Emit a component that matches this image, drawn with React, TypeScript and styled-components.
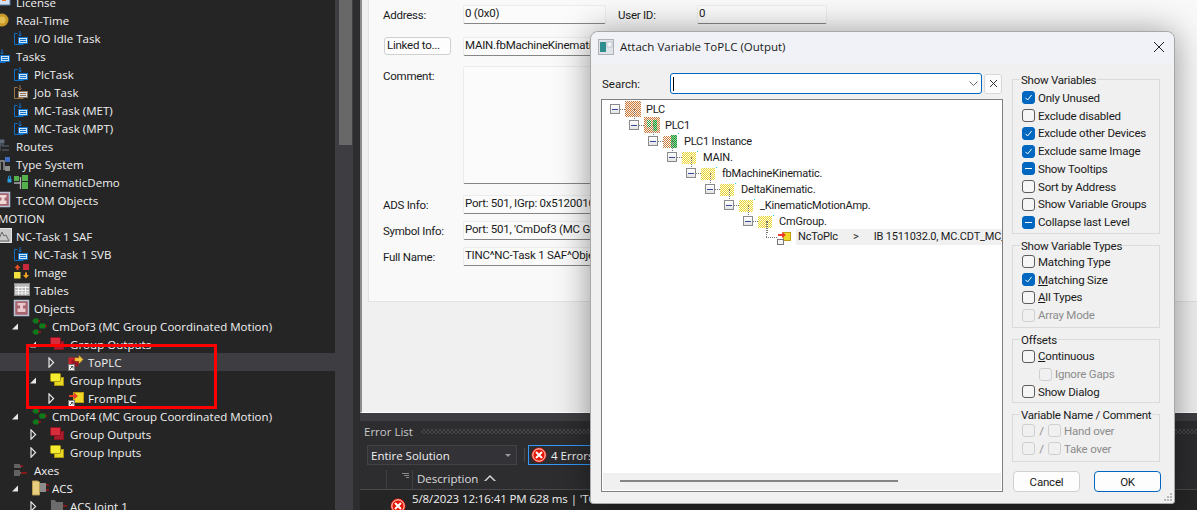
import React from 'react';
import styled, { createGlobalStyle } from 'styled-components';

const uiFont = `"Open Sans", "Noto Sans", "Liberation Sans", sans-serif`;
const bodyFont = `Roboto, "Liberation Sans", sans-serif`;

const Global = createGlobalStyle`
  html, body { margin: 0; padding: 0; background: #2d2d30; }
  * { box-sizing: border-box; }
`;

const Page = styled.div`
  width: 1197px;
  height: 510px;
  display: flex;
  position: relative;
  overflow: hidden;
  background: #2d2d30;
  font-family: ${uiFont};
  font-size: 11.5px;
`;

/* ---- Solution tree ---- */
const TreePanel = styled.div`
  width: 335px;
  flex: none;
  height: 510px;
  background: #252526;
  overflow: hidden;
`;
const TreeList = styled.div`
  margin: -7px 0 0 -42px;
  width: 377px;
`;
const TreeRow = styled.div<{ $level: number; $selected?: boolean }>`
  height: 18px;
  display: flex;
  align-items: center;
  padding-left: ${(p) => (p.$level + 1) * 18}px;
  background: ${(p) => (p.$selected ? '#3e3e42' : 'transparent')};
  color: #f1f1f1;
  white-space: nowrap;
  letter-spacing: 0.03px;
`;
const ArrowSlot = styled.span`
  width: 20px;
  height: 18px;
  flex: none;
  display: flex;
  align-items: center;
`;
const IconSlot = styled.span`
  width: 18px;
  height: 18px;
  flex: none;
  margin-right: 2px;
  display: block;
  svg { display: block; overflow: visible; }
`;
const Scrollbar = styled.div`
  width: 18px;
  flex: none;
  background: #3e3e42;
  padding: 0 1px 0 4px;
`;
const ScrollThumb = styled.div`
  height: 145px;
  background: #686868;
`;
const Gutter = styled.div`
  width: 7px;
  flex: none;
  background: #2d2d30;
`;

/* ---- Right column ---- */
const RightColumn = styled.div`
  flex: 1;
  min-width: 0;
  display: flex;
  flex-direction: column;
`;
const PropertyPane = styled.div`
  height: 413px;
  flex: none;
  background: #f0f0f0;
  border-left: 2px solid #8c8c8c;
  border-bottom: 1px solid #ffffff;
  padding-left: 6px;
  overflow: hidden;
`;
const FormPanel = styled.div`
  height: 302px;
  width: 900px;
  background: #f9f9f9;
  border-left: 1px solid #e2e2e2;
  border-bottom: 1px solid #e2e2e2;
  padding: 5px 0 0 14px;
  display: flex;
  flex-direction: column;
  color: #1a1a1a;
  font-family: ${bodyFont};
  font-size: 11.5px;
  letter-spacing: -0.25px;
`;
const FormRow = styled.div<{ $gap?: number }>`
  display: flex;
  align-items: flex-start;
  margin-top: ${(p) => p.$gap ?? 0}px;
`;
const FormLabel = styled.div<{ $w?: number; $ml?: number }>`
  width: ${(p) => p.$w ?? 80}px;
  height: 18px;
  flex: none;
  margin-left: ${(p) => p.$ml ?? 0}px;
  line-height: 21px;
`;
const ValueBox = styled.div<{ $w?: number; $h?: number }>`
  width: ${(p) => p.$w ?? 500}px;
  height: ${(p) => p.$h ?? 19}px;
  flex: none;
  background: #fbfbfb;
  border: 1px solid #ececec;
  border-bottom-color: #868686;
  border-radius: 2px;
  padding-left: 1px;
  line-height: 15px;
  white-space: nowrap;
  overflow: hidden;
`;
const LinkButton = styled.div`
  width: 67px;
  height: 18px;
  flex: none;
  margin: 0 12px 0 1px;
  background: #fdfdfd;
  border: 1px solid #d0d0d0;
  border-radius: 3px;
  padding-left: 2px;
  line-height: 15px;
`;

/* ---- Error list ---- */
const TabStrip = styled.div`
  height: 8px;
  flex: none;
  background: #3e3e42;
`;
const ErrorPanel = styled.div`
  flex: 1;
  background: #2d2d30;
  color: #f1f1f1;
  overflow: hidden;
`;
const ErrorTitleBar = styled.div`
  height: 20px;
  display: flex;
  align-items: center;
  gap: 8px;
  padding-left: 4px;
  color: #c8c8c8;
`;
const TitleDots = styled.div`
  flex: 1;
  height: 5px;
  background: repeating-conic-gradient(#46464a 0 25%, transparent 0 50%) 0 0 / 4px 4px;
`;
const ErrorToolbar = styled.div`
  height: 20px;
  margin-top: 4px;
  padding-left: 7px;
  display: flex;
  align-items: center;
`;
const ScopeCombo = styled.div`
  width: 150px;
  height: 20px;
  background: #333337;
  border: 1px solid #434346;
  padding: 0 3px;
  display: flex;
  align-items: center;
  justify-content: space-between;
`;
const ComboCaret = styled.span`
  width: 0;
  height: 0;
  margin-right: 2px;
  border: 3.5px solid transparent;
  border-top: 3.5px solid #999999;
  border-bottom: 0;
`;
const ToolbarSep = styled.div`
  width: 1px;
  height: 14px;
  background: #4a4a4e;
  margin: 0 3px 0 7px;
`;
const ErrorFilter = styled.div`
  height: 20px;
  width: 120px;
  border: 1px solid #3399ff;
  display: flex;
  align-items: center;
  gap: 4px;
  padding-left: 2px;
`;
const ListHeader = styled.div`
  height: 20px;
  margin-top: 5px;
  display: flex;
  border-bottom: 1px solid #4a4a4e;
  color: #dcdcdc;
`;
const HeaderCell = styled.div<{ $w: number }>`
  width: ${(p) => p.$w}px;
  flex: none;
  border-right: 1px solid #3f3f46;
  display: flex;
  align-items: center;
  justify-content: flex-end;
  padding: 0 3px 8px 0;
`;
const DescriptionCell = styled.div`
  display: flex;
  align-items: center;
  gap: 6px;
  padding: 0 0 3px 4px;
`;
const SortUp = styled.span`
  width: 0;
  height: 0;
  border: 6px solid transparent;
  border-top: 0;
  border-bottom: 6px solid #d8d8d8;
  position: relative;
  &::after {
    content: '';
    position: absolute;
    left: -4px;
    top: 2px;
    border: 4px solid transparent;
    border-top: 0;
    border-bottom: 4px solid #2d2d30;
  }
`;
const ErrorRow = styled.div`
  display: flex;
  padding-left: 30px;
  background: #252526;
  height: 30px;
`;
const ErrorRowIcon = styled.div`
  width: 22px;
  flex: none;
  padding-top: 8px;
`;
const ErrorRowText = styled.div`
  line-height: 17px;
  white-space: nowrap;
  letter-spacing: -0.1px;
`;

/* ---- Dialog ---- */
const Dialog = styled.div`
  position: absolute;
  left: 590px;
  top: 31px;
  width: 585px;
  height: 473px;
  background: #f0f0f0;
  border: 1px solid #a8a8a8;
  border-radius: 8px 8px 3px 3px;
  box-shadow: 0 2px 34px rgba(0, 0, 0, 0.42);
  display: flex;
  flex-direction: column;
  color: #1a1a1a;
  font-family: ${bodyFont};
  font-size: 11.5px;
`;
const DialogTitle = styled.div`
  height: 31px;
  flex: none;
  background: #f0f2f7;
  border-radius: 8px 8px 0 0;
  display: flex;
  align-items: center;
  padding: 0 9px 2px 7px;
  gap: 6px;
  font-family: ${uiFont};
`;
const TitleText = styled.div`
  flex: 1;
`;
const DialogBody = styled.div`
  flex: 1;
  display: flex;
  gap: 9px;
  padding: 10px 13px 11px 10px;
  min-height: 0;
`;
const LeftColumn = styled.div`
  width: 402px;
  flex: none;
  display: flex;
  flex-direction: column;
`;
const SearchRow = styled.div`
  height: 21px;
  flex: none;
  display: flex;
  align-items: center;
`;
const SearchLabel = styled.div`
  width: 69px;
  padding-left: 1px;
`;
const SearchInput = styled.div`
  width: 312px;
  height: 21px;
  background: #ffffff;
  border: 1px solid #0067c0;
  border-radius: 3px;
  display: flex;
  align-items: center;
  justify-content: space-between;
  padding: 0 3px 0 2px;
`;
const Caret = styled.span`
  width: 1px;
  height: 14px;
  background: #000;
`;
const ClearButton = styled.div`
  width: 18px;
  height: 20px;
  margin-left: 2px;
  background: #fbfbfb;
  border: 1px solid #d8d8d8;
  border-radius: 3px;
  display: flex;
  align-items: center;
  justify-content: center;
`;
const VarTree = styled.div`
  flex: 1;
  margin-top: 5px;
  background: #ffffff;
  border: 1px solid #7f7f7f;
  display: flex;
  flex-direction: column;
  min-height: 0;
  overflow: hidden;
`;
const VarTreeRows = styled.div`
  flex: 1;
  padding-top: 1px;
  font-size: 11px;
  letter-spacing: -0.2px;
`;
const VarRow = styled.div<{ $level: number }>`
  height: 16px;
  display: flex;
  align-items: center;
  padding-left: ${(p) => 8 + p.$level * 19}px;
  position: relative;
  white-space: nowrap;
`;
const LeafRow = styled.div`
  height: 16px;
  display: flex;
  align-items: center;
  position: relative;
  white-space: nowrap;
`;
const ExpandBox = styled.span`
  width: 10px;
  height: 10px;
  flex: none;
  background: linear-gradient(#ffffff, #e4e4e4);
  border: 1px solid #8a8a8a;
  display: flex;
  align-items: center;
  justify-content: center;
  &::after {
    content: '';
    width: 6px;
    height: 1px;
    background: #3a4a9a;
  }
`;
const DotLine = styled.span<{ $w?: number }>`
  width: ${(p) => p.$w ?? 5}px;
  height: 1px;
  flex: none;
  border-top: 1px dotted #777777;
`;
const VDot = styled.span<{ $h: number; $top: number; $left: number }>`
  position: absolute;
  left: ${(p) => p.$left}px;
  top: ${(p) => p.$top}px;
  height: ${(p) => p.$h}px;
  border-left: 1px dotted #777777;
`;
const DitherSlot = styled.span`
  width: 16px;
  height: 16px;
  flex: none;
  margin-right: 5px;
  svg { display: block; overflow: visible; }
`;
const VarIcon = styled.span`
  width: 16px;
  height: 16px;
  flex: none;
  margin-right: 3px;
  svg { display: block; overflow: visible; }
`;
const LeafSpacer = styled.span`
  width: 164px;
  flex: none;
`;
const VarSelected = styled.div`
  flex: 1;
  height: 16px;
  line-height: 16px;
  background: #f0f0f0;
  padding-left: 2px;
  overflow: hidden;
  white-space: pre;
`;
const HScroll = styled.div`
  height: 17px;
  flex: none;
  margin: 0 1px 1px;
  background: #f0f0f0;
  padding: 7px 0 0 17px;
`;
const HThumb = styled.div`
  width: 278px;
  height: 2px;
  background: #858585;
`;
const RightPanel = styled.div`
  width: 149px;
  flex: none;
  display: flex;
  flex-direction: column;
  letter-spacing: -0.2px;
`;
const Group = styled.fieldset<{ $h: number; $mt: number; $pt: number }>`
  margin: ${(p) => p.$mt}px 0 0;
  padding: ${(p) => p.$pt}px 0 0 9px;
  height: ${(p) => p.$h}px;
  width: 148px;
  border: 1px solid #dadada;
  min-inline-size: 0;
`;
const GroupLegend = styled.legend`
  padding: 0 1px;
  margin-left: -2px;
  line-height: 13px;
  height: 11px;
  white-space: nowrap;
  letter-spacing: -0.25px;
`;
const CheckRow = styled.div<{ $indent?: number }>`
  height: 17.75px;
  display: flex;
  align-items: center;
  padding-left: ${(p) => p.$indent ?? 0}px;
`;
const Box = styled.span<{ $state: 'on' | 'off' | 'mixed'; $disabled?: boolean; $flush?: boolean }>`
  width: 13px;
  height: 13px;
  flex: none;
  margin-right: ${(p) => (p.$flush ? 0 : 3)}px;
  border-radius: 3px;
  display: flex;
  align-items: center;
  justify-content: center;
  background: ${(p) => (p.$state === 'off' ? (p.$disabled ? '#f0f0f0' : '#f6f6f6') : '#0067c0')};
  border: 1px solid ${(p) => (p.$state !== 'off' ? '#0067c0' : p.$disabled ? '#cfcfcf' : '#5c5c5c')};
`;
const Dash = styled.span`
  width: 7px;
  height: 1px;
  background: #ffffff;
`;
const CheckLabel = styled.span<{ $disabled?: boolean }>`
  color: ${(p) => (p.$disabled ? '#8c8c8c' : '#1a1a1a')};
  white-space: nowrap;
  u { text-decoration: underline; }
`;
const Slash = styled.span`
  color: #8c8c8c;
  width: 13px;
  text-align: center;
`;
const ButtonRow = styled.div`
  display: flex;
  justify-content: space-between;
  width: 148px;
  margin-top: 9px;
  margin-left: 1px;
`;
const DialogButton = styled.div<{ $primary?: boolean }>`
  width: 67px;
  height: 21px;
  background: #fdfdfd;
  border: 1px solid ${(p) => (p.$primary ? '#0067c0' : '#d0d0d0')};
  border-radius: 4px;
  display: flex;
  align-items: center;
  justify-content: center;
`;
const Grip = styled.svg`
  position: absolute;
  right: 2px;
  bottom: 2px;
`;
const Highlight = styled.div`
  position: absolute;
  left: 26px;
  top: 344px;
  width: 191px;
  height: 65px;
  border: 3px solid #ff0000;
  pointer-events: none;
`;

/* ---- Icons ---- */
const Expanded = () => (
  <svg width="7" height="7" viewBox="0 0 7 7"><path d="M6 0.5V6.5H0z" fill="#e8e8e8" /></svg>
);
const Collapsed = () => (
  <svg width="7" height="11" viewBox="0 0 7 11"><path d="M1 .8L5.6 5.5 1 10.2z" fill="none" stroke="#e8e8e8" strokeWidth="1.2" /></svg>
);

const Task = ({ c = '#0e70c9' }: { c?: string }) => (
  <>
    <path d="M3.5 4.5H.5v11h9" fill="none" stroke={c} />
    <path d="M6 2v5M4.5 5.5L6 7l1.5-1.5" fill="none" stroke={c} />
    <rect x="4.5" y="8.5" width="9" height="6" fill="#cfe4f7" stroke={c} />
    <path d="M6 10.5h6M6 12.5h6" stroke={c} />
  </>
);
const Stack = ({ a, b, e }: { a: string; b: string; e: string }) => (
  <>
    <rect x="4.5" y="6.5" width="9" height="8" fill={b} stroke={e} />
    <rect x=".5" y="2.5" width="10" height="8" rx="1" fill={a} stroke={e} />
  </>
);
const Badge = () => (
  <>
    <rect x=".5" y="11.5" width="6" height="6" fill="#f4f4f4" stroke="#777" />
    <path d="M2 16l2.5-2.5M3 13.5h2v2" stroke="#333" fill="none" strokeWidth=".8" />
  </>
);
const GreenAxes = () => (
  <>
    <path d="M0 4h2M2 2h4v4H2zM8 9h-1M8 7h5v4H8zM0 15h2M2 13h4v4H2z" stroke="#0f7a1a" fill="#0f7a1a" />
    <path d="M6 4h2M13 9h2M6 15h3" stroke="#e01010" />
  </>
);
const Level0 = ({ children }: { children: React.ReactNode }) => <g transform="translate(4 0)">{children}</g>;
const icons: Record<string, React.ReactNode> = {
  license: (
    <Level0>
      <rect x="-3" y="-2" width="13" height="14" fill="#cfe0f2" stroke="#5c7da6" />
      <rect x="2" y="-2" width="4" height="10" fill="#e8762c" />
    </Level0>
  ),
  realtime: (
    <Level0>
      <circle cx="2" cy="9" r="6.5" fill="#c79a2a" />
      <circle cx="2" cy="9" r="3.5" fill="#e4bd50" />
    </Level0>
  ),
  task: <Task />,
  job: <Task c="#9a7448" />,
  tasks: <Task />,
  routes: (
    <Level0>
      <path d="M-2 3h6v3h-6zM-4 8h8M0 6v8M2 13h7M2 9h7" fill="#5d6a78" stroke="#5d6a78" />
    </Level0>
  ),
  types: (
    <Level0>
      <rect x="5" y="2" width="5" height="5" fill="#3d6fc0" />
      <rect x="5" y="11" width="5" height="5" fill="#8f8f8f" />
      <path d="M0 6h4v9M-4 8h4v7" fill="none" stroke="#9a9a9a" strokeWidth="1.4" />
    </Level0>
  ),
  kinematic: (
    <>
      <rect x="8" y="2" width="6" height="6" fill="#53b04a" />
      <rect x="8" y="9" width="6" height="7" fill="#53b04a" />
      <rect x="0" y="3" width="5" height="5" fill="#53b04a" />
      <path d="M6.5 4v12M0 10h6.5v6" fill="none" stroke="#b0b0b0" strokeWidth="1.3" />
      <rect x="-6.5" y="5.5" width="4" height="4" fill="#2aa0e0" />
      <path d="M-5.5 5.5V4a1 1 0 012 0v1.5" fill="none" stroke="#2aa0e0" />
    </>
  ),
  tccom: (
    <Level0>
      <rect x="-3.5" y="1.5" width="13" height="14" fill="#a8646c" stroke="#b8c4d8" strokeWidth="1.5" />
      <path d="M-.5 4h7v2.5H4.5v3h2V13h-7V9.5h2v-3h-2z" fill="#f0d8d8" />
    </Level0>
  ),
  nc: (
    <Level0>
      <rect x="-3.5" y="1.5" width="15" height="14" fill="#c8c8c8" stroke="#e4e4e4" />
      <path d="M-2 14l4-9 2 4 2-1 3 6z" fill="none" stroke="#666" />
    </Level0>
  ),
  image: (
    <>
      <rect x="9" y="1" width="6" height="6" fill="#c8283c" />
      <rect x="0" y="9" width="6.5" height="6.5" fill="#f0e040" />
      <path d="M3.5 1.5L6.5 5H.5z" fill="#e85020" />
      <rect x="2.5" y="5" width="2" height="2" fill="#e85020" />
      <path d="M12 15.5L9 12h6z" fill="#f0a020" />
      <rect x="11" y="9.5" width="2" height="2.5" fill="#f0a020" />
    </>
  ),
  tables: (
    <>
      <rect x=".5" y="2.5" width="15" height="12" fill="#b8b8b8" stroke="#8c8c8c" />
      <path d="M1 6.5h14M1 9.5h14M1 12h14M4.5 5v9M8 5v9M11.5 5v9" stroke="#f4f4f4" />
    </>
  ),
  objects: (
    <>
      <rect x=".5" y="1.5" width="14" height="15" fill="#a8646c" stroke="#b8c4d8" strokeWidth="1.5" />
      <path d="M3.5 4h8v2.5H9v3h2.5V13h-8V9.5H6v-3H3.5z" fill="#e8c8cc" />
    </>
  ),
  group: <GreenAxes />,
  outputs: <Stack a="#d82c3c" b="#a81c2c" e="#8c1420" />,
  inputs: <Stack a="#f4ec30" b="#e8d820" e="#a89410" />,
  toplc: (
    <>
      <rect x="0.5" y="4.5" width="9" height="8" fill="#c8202c" />
      <rect x="3.5" y="6.5" width="7" height="7" fill="#981828" />
      <path d="M7 5h4V2.5L15 6.5l-4 4V8H7z" fill="#f4c83c" stroke="#d8981c" strokeWidth=".5" />
      <Badge />
    </>
  ),
  fromplc: (
    <>
      <rect x="5.5" y="3.5" width="10" height="10" fill="#f0d828" stroke="#c0a010" />
      <path d="M1 6h5V3.5L10 7l-4 3.5V8H1z" fill="#e83c28" />
      <Badge />
    </>
  ),
  axes: (
    <>
      <path d="M0 4h6M0 6h7M0 10h6M0 12h7M0 14h6" stroke="#a0a0a0" />
      <path d="M6 5h3M7 12h6" stroke="#e01010" />
    </>
  ),
  acs: (
    <>
      <path d="M.5 2h5l2 1v13h-7z" fill="#e8cf80" stroke="#b89c50" />
      <rect x="8" y="4" width="6" height="9" fill="#8c8c8c" />
      <path d="M14 6h3M14 11h3" stroke="#e01010" />
    </>
  ),
  joint: (
    <>
      <path d="M1 3h4l1 2h7v9H1z" fill="#6c6c6c" />
      <path d="M13 9h4" stroke="#e01010" />
    </>
  ),
};

const Icon = ({ kind }: { kind?: string }) => (
  <IconSlot>
    {kind && (
      <svg width="18" height="18" viewBox="0 0 18 18">{icons[kind]}</svg>
    )}
  </IconSlot>
);

const ErrorIconSvg = styled.svg`
  display: block;
  flex: none;
`;
const ErrorIcon = () => (
  <ErrorIconSvg width="16" height="16" viewBox="0 0 16 16">
    <circle cx="8" cy="8" r="7.5" fill="#e51400" />
    <circle cx="8" cy="8" r="6.2" fill="none" stroke="#ffffff" strokeWidth=".9" />
    <path d="M5 5l6 6M11 5l-6 6" stroke="#ffffff" strokeWidth="2" />
  </ErrorIconSvg>
);

type Kind = 'plc' | 'plc1' | 'inst' | 'folder';
const ditherColors = { orange: '#c9793a', green: '#1f9a36', yellow: '#e8d43a' };
const DitherIcon = ({ kind, id }: { kind: Kind; id: string }) => (
  <DitherSlot>
    <svg width="16" height="16" viewBox="0 0 16 16" shapeRendering="crispEdges">
      <defs>
        {Object.entries(ditherColors).map(([n, c]) => (
          <pattern key={n} id={`${id}-${n}`} width="2" height="2" patternUnits="userSpaceOnUse">
            <rect width="1" height="1" fill={c} />
            <rect x="1" y="1" width="1" height="1" fill={c} />
          </pattern>
        ))}
      </defs>
      {kind === 'folder' && (
        <>
          <rect x="0" y="3" width="14" height="12" fill="#fffce0" />
          <rect x="0" y="3" width="14" height="12" fill={`url(#${id}-yellow)`} />
          <rect x="15" y="2" width="1" height="1" fill="#20d8e0" />
        </>
      )}
      {kind === 'plc' && (
        <>
          <rect x="0" y="0" width="16" height="16" fill="#f8ece0" />
          <rect x="0" y="0" width="16" height="16" fill={`url(#${id}-orange)`} />
        </>
      )}
      {kind === 'plc1' && (
        <>
          <rect x="0" y="0" width="16" height="16" fill="#f8ece0" />
          <rect x="0" y="0" width="16" height="16" fill={`url(#${id}-orange)`} />
          <rect x="3" y="3" width="4" height="7" fill="#ffffff" />
          <rect x="3" y="3" width="4" height="7" fill={`url(#${id}-green)`} />
          <rect x="9" y="3" width="4" height="11" fill="#9fdca8" />
          <rect x="9" y="3" width="4" height="11" fill={`url(#${id}-green)`} />
        </>
      )}
      {kind === 'inst' && (
        <>
          <rect x="0" y="3" width="8" height="12" fill={`url(#${id}-orange)`} />
          <rect x="8" y="2" width="6" height="13" fill="#8fd09a" />
          <rect x="8" y="2" width="6" height="13" fill={`url(#${id}-green)`} />
          <rect x="15" y="0" width="1" height="1" fill="#20d8e0" />
        </>
      )}
    </svg>
  </DitherSlot>
);

/* ---- Data ---- */
type Row = { t: string; l: number; i?: string; a?: 'e' | 'c'; s?: boolean };
const rows: Row[] = [
  { t: 'License', l: 0, i: 'license' },
  { t: 'Real-Time', l: 0, i: 'realtime' },
  { t: 'I/O Idle Task', l: 1, i: 'task' },
  { t: 'Tasks', l: 0, i: 'tasks' },
  { t: 'PlcTask', l: 1, i: 'task' },
  { t: 'Job Task', l: 1, i: 'job' },
  { t: 'MC-Task (MET)', l: 1, i: 'task' },
  { t: 'MC-Task (MPT)', l: 1, i: 'task' },
  { t: 'Routes', l: 0, i: 'routes' },
  { t: 'Type System', l: 0, i: 'types' },
  { t: 'KinematicDemo', l: 1, i: 'kinematic' },
  { t: 'TcCOM Objects', l: 0, i: 'tccom' },
  { t: 'MOTION', l: -1 },
  { t: 'NC-Task 1 SAF', l: 0, i: 'nc' },
  { t: 'NC-Task 1 SVB', l: 1, i: 'task' },
  { t: 'Image', l: 1, i: 'image' },
  { t: 'Tables', l: 1, i: 'tables' },
  { t: 'Objects', l: 1, i: 'objects' },
  { t: 'CmDof3 (MC Group Coordinated Motion)', l: 2, i: 'group', a: 'e' },
  { t: 'Group Outputs', l: 3, i: 'outputs', a: 'e' },
  { t: 'ToPLC', l: 4, i: 'toplc', a: 'c', s: true },
  { t: 'Group Inputs', l: 3, i: 'inputs', a: 'e' },
  { t: 'FromPLC', l: 4, i: 'fromplc', a: 'c' },
  { t: 'CmDof4 (MC Group Coordinated Motion)', l: 2, i: 'group', a: 'e' },
  { t: 'Group Outputs', l: 3, i: 'outputs', a: 'c' },
  { t: 'Group Inputs', l: 3, i: 'inputs', a: 'c' },
  { t: 'Axes', l: 1, i: 'axes' },
  { t: 'ACS', l: 2, i: 'acs', a: 'e' },
  { t: 'ACS Joint 1', l: 3, i: 'joint', a: 'c' },
];

const varRows: { t: string; k: Kind }[] = [
  { t: 'PLC', k: 'plc' },
  { t: 'PLC1', k: 'plc1' },
  { t: 'PLC1 Instance', k: 'inst' },
  { t: 'MAIN.', k: 'folder' },
  { t: 'fbMachineKinematic.', k: 'folder' },
  { t: 'DeltaKinematic.', k: 'folder' },
  { t: '_KinematicMotionAmp.', k: 'folder' },
  { t: 'CmGroup.', k: 'folder' },
];

type Check = { label: React.ReactNode; state?: 'on' | 'off' | 'mixed'; disabled?: boolean; indent?: number };
const Tick = () => (
  <svg width="9" height="9" viewBox="0 0 9 9"><path d="M1.5 4.8L3.6 7 7.6 2" fill="none" stroke="#fff" strokeWidth="1" /></svg>
);
const CheckItem = ({ label, state = 'off', disabled, indent }: Check) => (
  <CheckRow $indent={indent}>
    <Box $state={state} $disabled={disabled}>
      {state === 'on' && <Tick />}
      {state === 'mixed' && <Dash />}
    </Box>
    <CheckLabel $disabled={disabled}>{label}</CheckLabel>
  </CheckRow>
);
const HandItem = ({ label }: { label: string }) => (
  <CheckRow>
    <Box $state="off" $disabled $flush />
    <Slash>/</Slash>
    <Box $state="off" $disabled />
    <CheckLabel $disabled>{label}</CheckLabel>
  </CheckRow>
);

export default function App() {
  return (
    <Page>
      <Global />
      <TreePanel>
        <TreeList>
          {rows.map((r, i) => (
            <TreeRow key={i} $level={r.l} $selected={r.s}>
              <ArrowSlot>{r.a === 'e' ? <Expanded /> : r.a === 'c' ? <Collapsed /> : null}</ArrowSlot>
              <Icon kind={r.i} />
              <span>{r.t}</span>
            </TreeRow>
          ))}
        </TreeList>
      </TreePanel>
      <Scrollbar><ScrollThumb /></Scrollbar>
      <Gutter />
      <RightColumn>
        <PropertyPane>
          <FormPanel>
            <FormRow>
              <FormLabel>Address:</FormLabel>
              <ValueBox $w={143}>0 (0x0)</ValueBox>
              <FormLabel $w={79} $ml={12}>User ID:</FormLabel>
              <ValueBox $w={130}>0</ValueBox>
            </FormRow>
            <FormRow $gap={13}>
              <LinkButton>Linked to...</LinkButton>
              <ValueBox>MAIN.fbMachineKinematic.DeltaKinematic</ValueBox>
            </FormRow>
            <FormRow $gap={10}>
              <FormLabel>Comment:</FormLabel>
              <ValueBox $h={118} />
            </FormRow>
            <FormRow $gap={11}>
              <FormLabel>ADS Info:</FormLabel>
              <ValueBox>Port: 501, IGrp: 0x5120010</ValueBox>
            </FormRow>
            <FormRow $gap={7}>
              <FormLabel>Symbol Info:</FormLabel>
              <ValueBox>Port: 501, 'CmDof3 (MC Group Coordinated Motion)'</ValueBox>
            </FormRow>
            <FormRow $gap={7}>
              <FormLabel>Full Name:</FormLabel>
              <ValueBox>TINC^NC-Task 1 SAF^Objects^CmDof3</ValueBox>
            </FormRow>
          </FormPanel>
        </PropertyPane>
        <TabStrip />
        <ErrorPanel>
          <ErrorTitleBar>
            Error List
            <TitleDots />
          </ErrorTitleBar>
          <ErrorToolbar>
            <ScopeCombo>
              Entire Solution
              <ComboCaret />
            </ScopeCombo>
            <ToolbarSep />
            <ErrorFilter>
              <ErrorIcon />
              4 Errors
            </ErrorFilter>
          </ErrorToolbar>
          <ListHeader>
            <HeaderCell $w={27} />
            <HeaderCell $w={26}>
              <svg width="7" height="6" viewBox="0 0 7 6"><path d="M0 .5h7M2 2.5h5M4 4.5h3" stroke="#8a8a8a" /></svg>
            </HeaderCell>
            <DescriptionCell>
              Description
              <SortUp />
            </DescriptionCell>
          </ListHeader>
          <ErrorRow>
            <ErrorRowIcon><ErrorIcon /></ErrorRowIcon>
            <ErrorRowText>5/8/2023 12:16:41 PM 628 ms | 'TCOM Server'</ErrorRowText>
          </ErrorRow>
        </ErrorPanel>
      </RightColumn>

      <Dialog>
        <DialogTitle>
          <svg width="16" height="16" viewBox="0 0 16 16">
            <rect x=".5" y=".5" width="15" height="15" fill="#dfe4ea" stroke="#b0b0b0" />
            <rect x="2" y="3" width="6" height="10" fill="#2f8f8f" />
            <rect x="9" y="3" width="5" height="5" fill="#f4f4f4" stroke="#9aa4b4" strokeWidth=".5" />
          </svg>
          <TitleText>Attach Variable ToPLC (Output)</TitleText>
          <svg width="12" height="12" viewBox="0 0 12 12"><path d="M1 1l10 10M11 1L1 11" stroke="#222" strokeWidth="1" /></svg>
        </DialogTitle>
        <DialogBody>
          <LeftColumn>
            <SearchRow>
              <SearchLabel>Search:</SearchLabel>
              <SearchInput>
                <Caret />
                <svg width="9" height="5" viewBox="0 0 9 5"><path d="M.5.5l4 4 4-4" fill="none" stroke="#666" /></svg>
              </SearchInput>
              <ClearButton>
                <svg width="9" height="9" viewBox="0 0 9 9"><path d="M1 1l7 7M8 1L1 8" stroke="#333" /></svg>
              </ClearButton>
            </SearchRow>
            <VarTree>
              <VarTreeRows>
                {varRows.map((r, i) => (
                  <VarRow key={r.t} $level={i}>
                    <VDot $left={32 + i * 19} $top={8} $h={12} />
                    <ExpandBox />
                    <DotLine />
                    <DitherIcon kind={r.k} id={`d${i}`} />
                    {r.t}
                  </VarRow>
                ))}
                <LeafRow>
                  <VDot $left={164} $top={-8} $h={16} />
                  <LeafSpacer />
                  <DotLine $w={11} />
                  <VarIcon>
                    <svg width="16" height="16" viewBox="0 0 16 16">
                      <rect x="6.5" y="3.5" width="7" height="8" fill="#f0d828" stroke="#c0a010" />
                      <path d="M1 5h4V3l4 3-4 3V7H1z" fill="#e83c28" />
                      <rect x=".5" y="10.5" width="6" height="5" fill="#f4f4f4" stroke="#777" />
                    </svg>
                  </VarIcon>
                  <VarSelected>{'NcToPlc      >      IB 1511032.0, MC.CDT_MC_GROUP_REF'}</VarSelected>
                </LeafRow>
              </VarTreeRows>
              <HScroll><HThumb /></HScroll>
            </VarTree>
          </LeftColumn>
          <RightPanel>
            <Group $h={160} $mt={1} $pt={4}>
              <GroupLegend>Show Variables</GroupLegend>
              <CheckItem label="Only Unused" state="on" />
              <CheckItem label="Exclude disabled" />
              <CheckItem label="Exclude other Devices" state="on" />
              <CheckItem label="Exclude same Image" state="on" />
              <CheckItem label="Show Tooltips" state="mixed" />
              <CheckItem label="Sort by Address" />
              <CheckItem label="Show Variable Groups" />
              <CheckItem label="Collapse last Level" state="mixed" />
            </Group>
            <Group $h={88} $mt={6} $pt={2}>
              <GroupLegend>Show Variable Types</GroupLegend>
              <CheckItem label="Matching Type" />
              <CheckItem label={<><u>M</u>atching Size</>} state="on" />
              <CheckItem label={<><u>A</u>ll Types</>} />
              <CheckItem label="Array Mode" disabled />
            </Group>
            <Group $h={69} $mt={6} $pt={2.5}>
              <GroupLegend>Offsets</GroupLegend>
              <CheckItem label={<><u>C</u>ontinuous</>} />
              <CheckItem label="Ignore Gaps" disabled indent={17} />
              <CheckItem label="Show Dialog" />
            </Group>
            <Group $h={53} $mt={6} $pt={2}>
              <GroupLegend>Variable Name / Comment</GroupLegend>
              <HandItem label="Hand over" />
              <HandItem label="Take over" />
            </Group>
            <ButtonRow>
              <DialogButton>Cancel</DialogButton>
              <DialogButton $primary>OK</DialogButton>
            </ButtonRow>
          </RightPanel>
        </DialogBody>
        <Grip width="8" height="8" viewBox="0 0 8 8">
          <path d="M6 0h2v2H6zM3 3h2v2H3zM6 3h2v2H6zM0 6h2v2H0zM3 6h2v2H3zM6 6h2v2H6z" fill="#b8b8b8" />
        </Grip>
      </Dialog>
      <Highlight />
    </Page>
  );
}
